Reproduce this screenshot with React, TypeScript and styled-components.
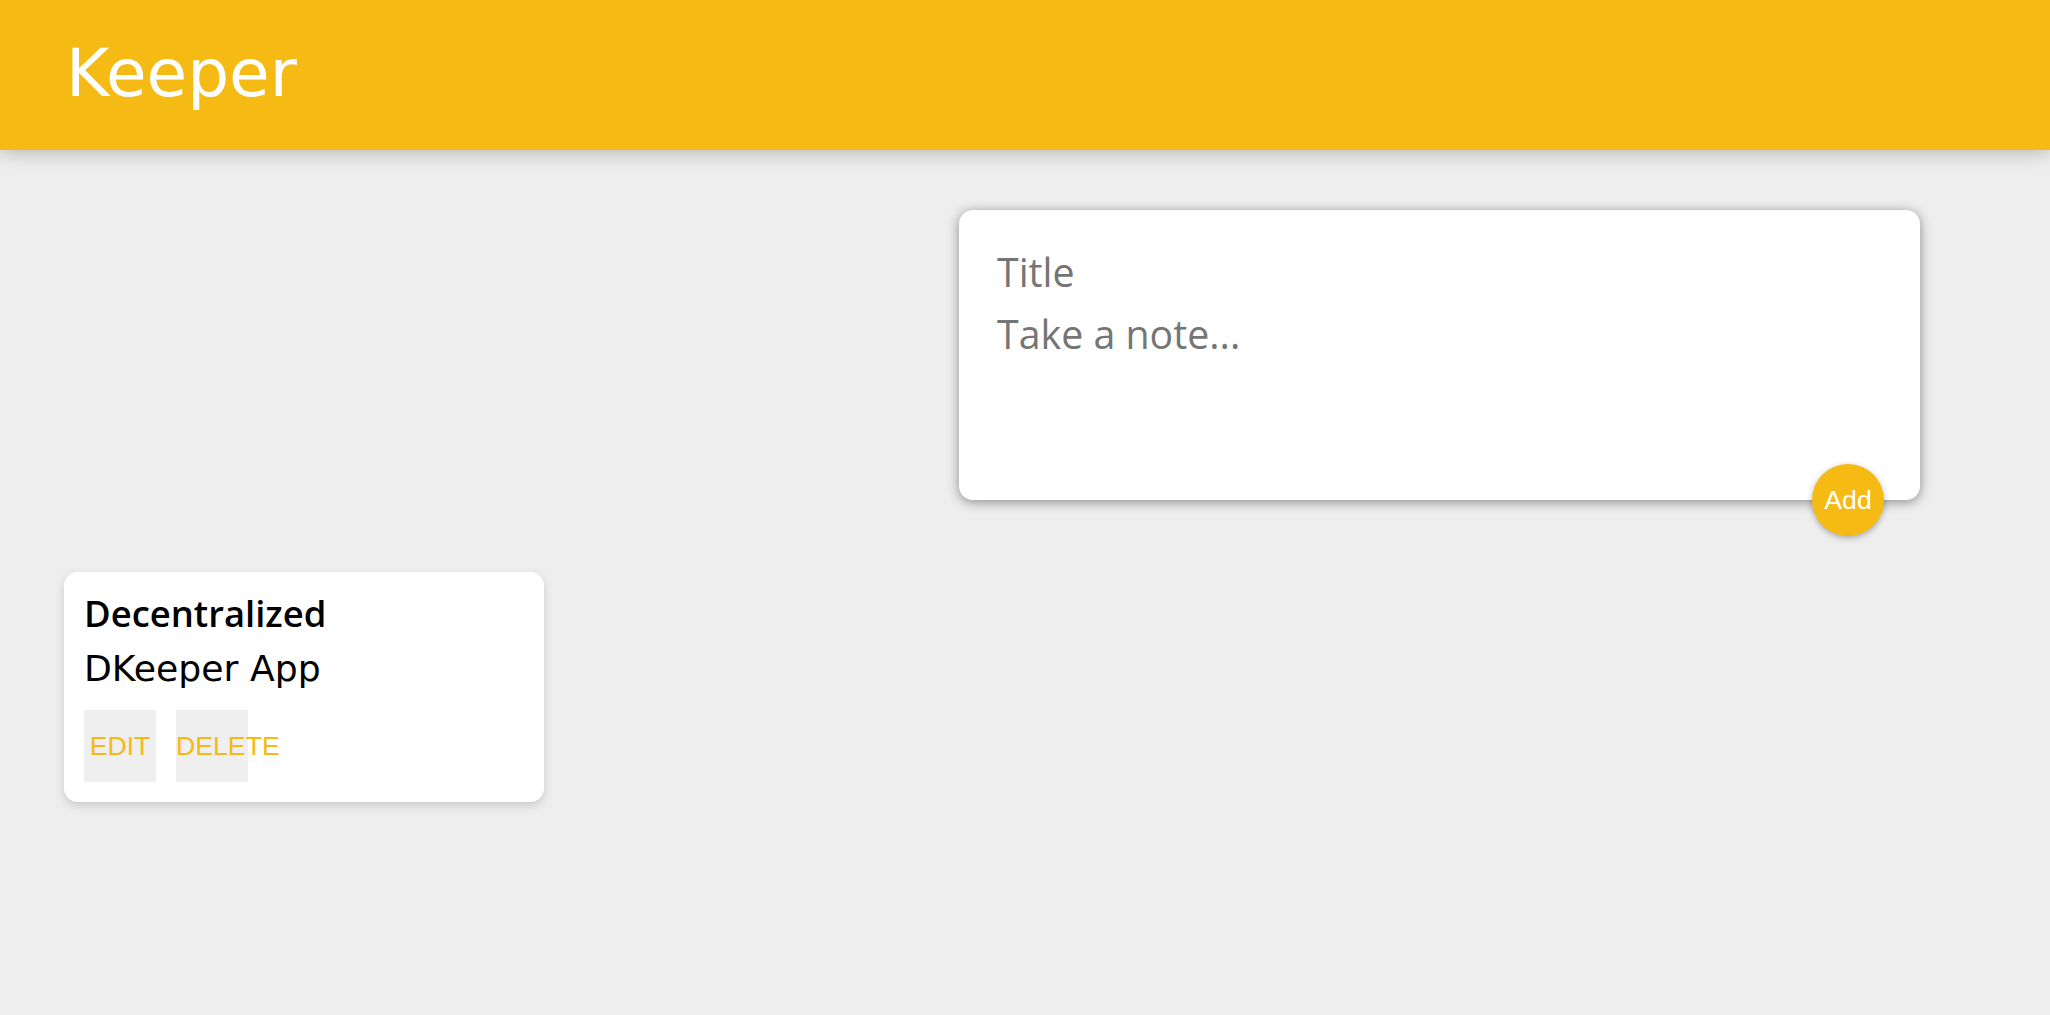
import React from "react";
import styled, { createGlobalStyle } from "styled-components";

const GlobalStyle = createGlobalStyle`
  * { margin: 0; padding: 0; box-sizing: border-box; }
  html, body { background: #eeeeee; }
  body { min-height: 100vh; font-family: "DejaVu Sans", sans-serif; }
`;

const Page = styled.div`
  min-height: 100vh;
  background: #eeeeee;
`;

const Header = styled.header`
  background-color: #f5ba13;
  padding: 34px 64px 36px 66px;
  box-shadow: 0 0 20px 0 rgba(0, 0, 0, 0.3);
`;

const Logo = styled.h1`
  color: #ffffff;
  font-family: "DejaVu Sans", sans-serif;
  font-weight: 400;
  font-size: 66px;
  line-height: 80px;
`;

const Main = styled.main`
  padding: 0 32px;
`;

const FormRow = styled.div`
  display: flex;
  justify-content: flex-end;
  padding: 60px 98px 40px 0;
`;

const CreateForm = styled.form`
  position: relative;
  width: 961px;
  height: 290px;
  background: #ffffff;
  padding: 30px;
  border-radius: 14px;
  box-shadow: 0 2px 12px rgb(138, 137, 137);
`;

const fieldCss = `
  display: block;
  width: 100%;
  border: none;
  outline: none;
  resize: none;
  padding: 8px;
  font-family: "Open Sans", sans-serif;
  font-size: 39.3px;
  line-height: 47px;
  color: #000;
  background: transparent;
  &::placeholder { color: #757575; opacity: 1; }
`;

const TitleInput = styled.input`
  ${fieldCss}
  height: 63px;
`;

const NoteArea = styled.textarea`
  ${fieldCss}
  height: 167px;
`;

const AddButton = styled.button`
  position: absolute;
  right: 36px;
  bottom: -36px;
  width: 72px;
  height: 72px;
  border: none;
  border-radius: 50%;
  background: #f5ba13;
  color: #ffffff;
  font-family: "Liberation Sans", Arial, sans-serif;
  font-size: 26.667px;
  box-shadow: 0 2px 6px rgba(0, 0, 0, 0.3);
  cursor: pointer;
`;

const NotesGrid = styled.section`
  display: flex;
  flex-wrap: wrap;
  gap: 32px;
  padding: 32px;
`;

const NoteCard = styled.div`
  width: 480px;
  background: #ffffff;
  border-radius: 14px;
  box-shadow: 0 4px 10px #cccccc;
  padding: 20px;
`;

const NoteTitle = styled.h1`
  font-family: "Open Sans", sans-serif;
  font-weight: 600;
  font-size: 36.4px;
  line-height: 43px;
  color: #000;
  margin-bottom: 12px;
`;

const NoteBody = styled.p`
  font-family: "DejaVu Sans", sans-serif;
  font-weight: 400;
  font-size: 36.2px;
  line-height: 43px;
  color: #000;
  margin-bottom: 20px;
  white-space: pre-wrap;
`;

const ActionRow = styled.div`
  display: flex;
  gap: 20px;
`;

const ActionButton = styled.button`
  width: 72px;
  height: 72px;
  border: none;
  background: #efefef;
  color: #f5ba13;
  font-family: "Liberation Sans", Arial, sans-serif;
  font-size: 26.667px;
  cursor: pointer;
  outline: none;
`;

export default function App() {
  return (
    <Page>
      <GlobalStyle />
      <Header>
        <Logo>Keeper</Logo>
      </Header>
      <Main>
        <FormRow>
          <CreateForm onSubmit={(e) => e.preventDefault()}>
            <TitleInput name="title" placeholder="Title" />
            <NoteArea name="content" placeholder="Take a note..." rows={3} />
            <AddButton type="submit">Add</AddButton>
          </CreateForm>
        </FormRow>
        <NotesGrid>
          <NoteCard>
            <NoteTitle>Decentralized</NoteTitle>
            <NoteBody>DKeeper App</NoteBody>
            <ActionRow>
              <ActionButton>EDIT</ActionButton>
              <ActionButton>DELETE</ActionButton>
            </ActionRow>
          </NoteCard>
        </NotesGrid>
      </Main>
    </Page>
  );
}
